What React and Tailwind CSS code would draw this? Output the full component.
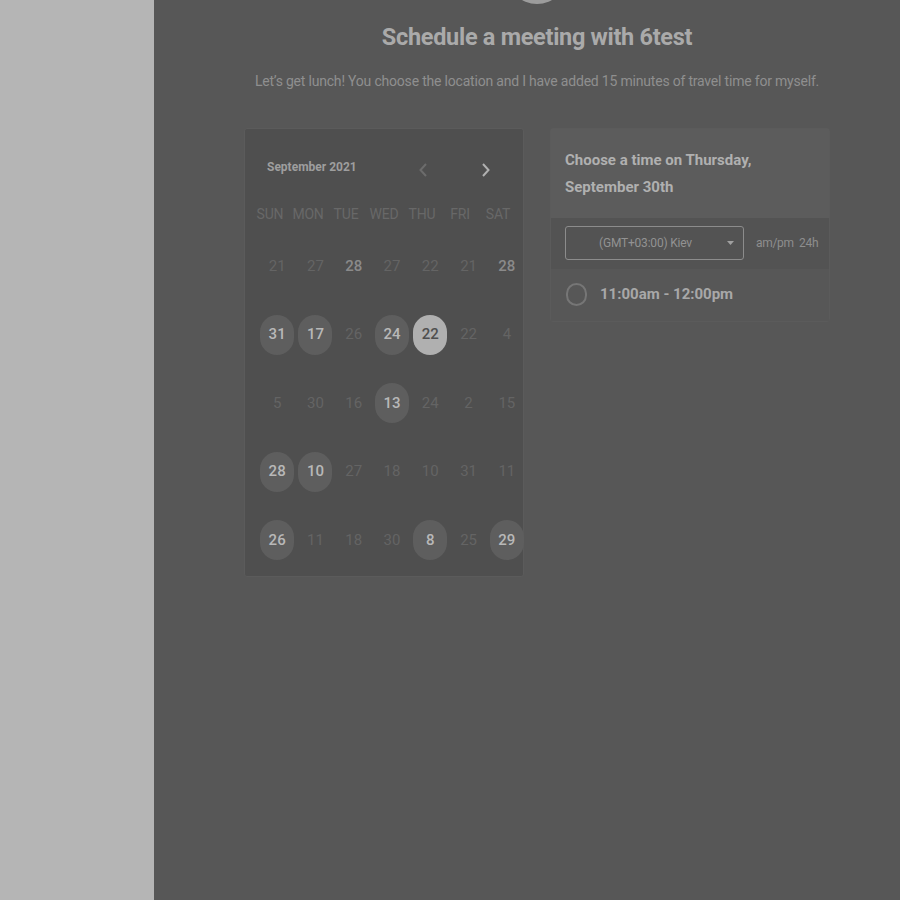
import React from "react";

const rows = [
  [["21", 0], ["27", 0], ["28", 1], ["27", 0], ["22", 0], ["21", 0], ["28", 1]],
  [["31", 2], ["17", 2], ["26", 0], ["24", 2], ["22", 3], ["22", 0], ["4", 0]],
  [["5", 0], ["30", 0], ["16", 0], ["13", 2], ["24", 0], ["2", 0], ["15", 0]],
  [["28", 2], ["10", 2], ["27", 0], ["18", 0], ["10", 0], ["31", 0], ["11", 0]],
  [["26", 2], ["11", 0], ["18", 0], ["30", 0], ["8", 2], ["25", 0], ["29", 2]],
];

function Day({ label, kind }) {
  if (kind === 2) {
    return (
      <span className="w-[34px] h-[40px] rounded-full bg-[#5e5e5e] text-[#b8b8b8] font-medium flex items-center justify-center">
        {label}
      </span>
    );
  }
  if (kind === 3) {
    return (
      <span className="w-[34px] h-[40px] rounded-full bg-[#b0b0b0] text-[#4f4f4f] font-medium flex items-center justify-center">
        {label}
      </span>
    );
  }
  return (
    <span className={kind === 1 ? "text-[#8a8a8a] font-medium" : "text-[#646464]"}>
      {label}
    </span>
  );
}

export default function App() {
  return (
    <div className="flex w-[900px] h-[900px] overflow-hidden font-['Roboto',sans-serif]">
      <aside className="w-[154px] shrink-0 bg-[#b5b5b5]" />

      <main className="flex-1 bg-[#575757] pl-5 flex flex-col items-center">
        <div className="w-[60px] h-[60px] rounded-full bg-[#9c9c9c] -mt-[56px] shrink-0" />
        <h1 className="mt-[18px] text-[23.5px] font-bold text-[#aaaaaa] tracking-[-0.3px] leading-[30px]">
          Schedule a meeting with 6test
        </h1>
        <p className="mt-[20px] text-[14px] text-[#8f8f8f] tracking-[-0.2px] leading-[18px]">
          Let’s get lunch! You choose the location and I have added 15 minutes of travel time for myself.
        </p>

        <div className="mt-[38px] flex gap-[26px] items-start">
          {/* calendar */}
          <section className="w-[280px] h-[449px] bg-[#4f4f4f] border border-[#5b5b5b] rounded-[3px]">
            <div className="flex items-center justify-between pt-[27px] pl-[22px] pr-[32px]">
              <span className="text-[12px] font-bold text-[#9e9e9e]">September 2021</span>
              <div className="flex items-center gap-[53px] mt-[6px]">
                <svg width="10" height="16" viewBox="0 0 10 16" fill="none">
                  <path d="M8 2 L2.5 8 L8 14" stroke="#6c6c6c" strokeWidth="2" />
                </svg>
                <svg width="10" height="16" viewBox="0 0 10 16" fill="none">
                  <path d="M2 2 L7.5 8 L2 14" stroke="#b0b0b0" strokeWidth="2" />
                </svg>
              </div>
            </div>
            <div className="grid grid-cols-7 mt-[27px] mx-[6px] text-[14px] text-[#686868] text-center leading-[18px] tracking-[-0.2px]">
              {["SUN", "MON", "TUE", "WED", "THU", "FRI", "SAT"].map((d) => (
                <span key={d}>{d}</span>
              ))}
            </div>
            <div className="mt-[23px] ml-[13px] w-[268px] flex flex-col gap-[28.5px]">
              {rows.map((r, i) => (
                <div key={i} className="grid grid-cols-7 h-[40px] text-[15px]">
                  {r.map(([label, kind], j) => (
                    <div key={j} className="flex items-center justify-center">
                      <Day label={label} kind={kind} />
                    </div>
                  ))}
                </div>
              ))}
            </div>
          </section>

          {/* times */}
          <section className="w-[280px] border border-[#5b5b5b] rounded-[3px] bg-[#535353]">
            <div className="bg-[#5c5c5c] px-[14px] pt-[18px] pb-[17px] text-[15px] font-bold text-[#b0b0b0] leading-[27px]">
              Choose a time on Thursday,
              <br />
              September 30th
            </div>
            <div className="flex items-center px-[14px] pt-[8px] pb-[9px]">
              <div className="w-[179px] h-[34px] border border-[#8c8c8c] rounded-[3px] flex items-center pl-[33px] pr-[9px] text-[12px] text-[#929292] tracking-[-0.2px] shrink-0">
                <span className="flex-1">(GMT+03:00) Kiev</span>
                <svg width="7" height="4" viewBox="0 0 7 4">
                  <path d="M0 0 L7 0 L3.5 4 Z" fill="#a0a0a0" />
                </svg>
              </div>
              <span className="ml-[12px] text-[12px] text-[#8e8e8e] tracking-[-0.3px] whitespace-pre">am/pm  24h</span>
            </div>
            <div className="flex items-center px-[15px] pt-[14px] pb-[15px] bg-[#575757]">
              <span className="w-[21px] h-[23px] rounded-full border-2 border-[#767676]" />
              <span className="ml-[13px] text-[15px] font-bold text-[#a8a8a8]">11:00am - 12:00pm</span>
            </div>
          </section>
        </div>
      </main>
    </div>
  );
}
